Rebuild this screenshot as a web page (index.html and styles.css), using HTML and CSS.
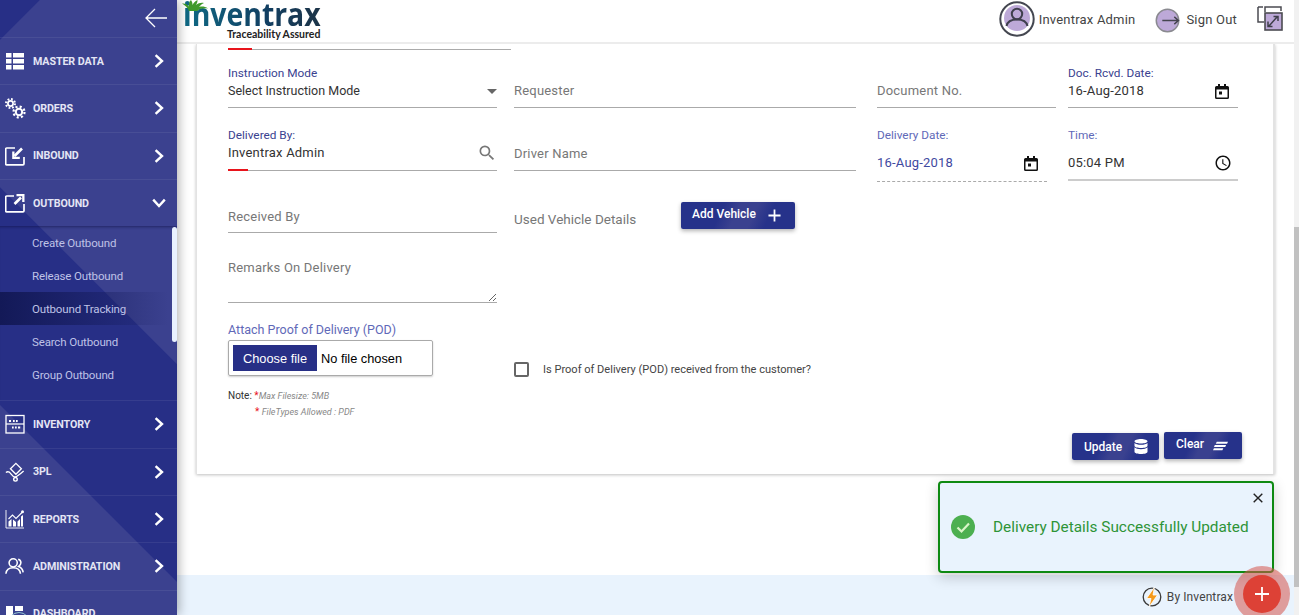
FILE: index.html
```html
<!DOCTYPE html>
<html lang="en">
<head>
<meta charset="utf-8">
<title>Inventrax - Outbound Tracking</title>
<link rel="stylesheet" href="styles.css">
</head>
<body>
<svg class="defs" aria-hidden="true">
  <symbol id="chev-r" viewBox="0 0 10 14"><path d="M1.6 1.2 8 7l-6.400 5.800" fill="none" stroke="currentColor" stroke-width="2.400"/></symbol>
  <symbol id="chev-d" viewBox="0 0 14 10"><path d="M1.200 1.600 7 8l5.800-6.400" fill="none" stroke="currentColor" stroke-width="2.400"/></symbol>
  <symbol id="cal" viewBox="0 0 14 15"><path d="M3 0h2v2h4V0h2v2h1.500A1.500 1.500 0 0 1 14 3.500v10a1.500 1.500 0 0 1-1.500 1.500h-11A1.500 1.500 0 0 1 0 13.500v-10A1.500 1.500 0 0 1 1.500 2H3zM1.500 5.500v8h11v-8z" fill="#111"/><rect x="4" y="7.500" width="3" height="3" fill="#111"/></symbol>
</svg>

<aside class="sidebar">
  <div class="side-top">
    <svg class="back" viewBox="0 0 23 20"><path d="M22.500 10H1.500M10.500 1 1.500 10l9 9" fill="none" stroke="#fff" stroke-width="1.300"/></svg>
  </div>
  <nav class="nav">
    <a class="nav-item"><svg class="ni" viewBox="0 0 20 20"><path d="M1 2h5.500v4.600H1zM8 2h11v4.600H8zM1 8h5.500v4.600H1zM8 8h11v4.600H8zM1 14h5.500v4.600H1zM8 14h11v4.600H8z" fill="#fff"/></svg><span class="nl">MASTER DATA</span><svg class="chev"><use href="#chev-r"/></svg></a>
    <a class="nav-item"><svg class="ni ni-gears" viewBox="0 0 22 22"><g fill="none" stroke="#fff"><circle cx="6.500" cy="6.500" r="2.600" stroke-width="1.700"/><circle cx="6.500" cy="6.500" r="4.500" stroke-width="2" stroke-dasharray="1.800 1.730"/><circle cx="15" cy="15" r="3.200" stroke-width="2"/><circle cx="15" cy="15" r="5.500" stroke-width="2.200" stroke-dasharray="2.100 2.220"/></g></svg><span class="nl">ORDERS</span><svg class="chev"><use href="#chev-r"/></svg></a>
    <a class="nav-item"><svg class="ni" viewBox="0 0 20 20"><path d="M10 2H1.700a1 1 0 0 0-1 1v14.800a1 1 0 0 0 1 1H18a1 1 0 0 0 1-1V11" fill="none" stroke="#fff" stroke-width="1.700"/><path d="M17 2.500 9.500 10" stroke="#fff" stroke-width="2.600"/><path d="M7.200 5.500v7.500h7.600v-2.300H9.500V5.500z" fill="#fff"/></svg><span class="nl">INBOUND</span><svg class="chev"><use href="#chev-r"/></svg></a>
    <a class="nav-item"><svg class="ni" viewBox="0 0 20 20"><path d="M9 3H1.700a1 1 0 0 0-1 1v13.800a1 1 0 0 0 1 1H18a1 1 0 0 0 1-1V11" fill="none" stroke="#fff" stroke-width="1.700"/><path d="M9.500 11 16 4.500" stroke="#fff" stroke-width="2.600"/><path d="M11.500 1h8v8h-2.300V3.300h-5.700z" fill="#fff"/></svg><span class="nl">OUTBOUND</span><svg class="chev chev-open"><use href="#chev-d"/></svg></a>
    <div class="sub">
      <a class="sub-item">Create Outbound</a>
      <a class="sub-item">Release Outbound</a>
      <a class="sub-item sub-item-active">Outbound Tracking</a>
      <a class="sub-item">Search Outbound</a>
      <a class="sub-item">Group Outbound</a>
    </div>
    <a class="nav-item"><svg class="ni" viewBox="0 0 20 20"><rect x="1" y="1.500" width="18" height="17.500" fill="none" stroke="#fff" stroke-width="1.300"/><path d="M1 10h18" stroke="#fff" stroke-width="1.200"/><path d="M4 6h2v2H4zM8 6h1.700v2H8zM11 6h1.700v2H11zM7 12.500h1.700v2H7zM10 12.500h1.700v2H10zM13 12.500h2.200v2H13z" fill="#fff"/></svg><span class="nl">INVENTORY</span><svg class="chev"><use href="#chev-r"/></svg></a>
    <a class="nav-item"><svg class="ni" viewBox="0 0 22 22"><path d="M12 1.500 18 7.500 12 13.500 6 7.500z" fill="none" stroke="#fff" stroke-width="1.500"/><path d="M1 11.500c2-1.500 4-.5 5.500 1.500s3 3.500 4.500 3.500 5-2.500 9.500-6.500" fill="none" stroke="#fff" stroke-width="1.500"/><circle cx="11.500" cy="19" r="2" fill="none" stroke="#fff" stroke-width="1.500"/></svg><span class="nl">3PL</span><svg class="chev"><use href="#chev-r"/></svg></a>
    <a class="nav-item"><svg class="ni" viewBox="0 0 20 20"><path d="M1 1v18h18" fill="none" stroke="#fff" stroke-width=".9"/><path d="M3.500 17.500v-5l3-2.500v7.500zM8 17.500v-7l3 2.500v4.500zM12.500 17.500v-5l2.500-2.500v7.500zM16 17.500V7.500l2-1.500v11.500z" fill="#fff"/><path d="M3.500 10 7.500 6l3.500 3.500L17.500 3" fill="none" stroke="#fff" stroke-width="1.100"/><circle cx="17.500" cy="2.800" r="1.500" fill="#fff"/></svg><span class="nl">REPORTS</span><svg class="chev"><use href="#chev-r"/></svg></a>
    <a class="nav-item"><svg class="ni" viewBox="0 0 22 20"><g fill="none" stroke="#fff" stroke-width="1.700"><circle cx="9" cy="6.500" r="4.500"/><path d="M1 18.500c.5-4.500 3-6.500 8-6.500s7.500 2 8 6.500"/><path d="M14.500 2.500c2 .5 3 2 3 4s-1 3-2.500 4c2.500 1 4.500 3 5 6.500"/></g></svg><span class="nl">ADMINISTRATION</span><svg class="chev"><use href="#chev-r"/></svg></a>
    <a class="nav-item"><svg class="ni" viewBox="0 0 20 20"><path d="M1 2h7v9H1zM10 2h8v5h-8zM1 13h7v5H1zM10 9h8v9h-8z" fill="#fff"/></svg><span class="nl">DASHBOARD</span></a>
  </nav>
  <span class="side-thumb"></span>
  <span class="side-badge"></span>
</aside>

<div class="main">
  <header class="topbar">
    <div class="logo">
      <span class="logo-name">inventrax</span>
      <span class="logo-tag">Traceability Assured</span>
      <svg class="leaf" viewBox="0 0 26 11"><path d="M7 11C6 8 3 5 0 3.500c2.500-.5 5 .5 7 3C6.500 4 7 1.500 9 0c1 1.500 1.500 3 1.500 5C11.500 3 13 1 15.500 0c0 2-.5 3.500-1.500 5 2.500-2 5-2.500 8-2-2 1-4 2.500-5 4 3-1 6-.5 9 1.500-4-.5-8 0-11 2.500H9z" fill="#3f9a2b"/></svg>
    </div>
    <svg class="avatar" viewBox="0 0 36 36"><circle cx="18" cy="18" r="16.700" fill="#fff" stroke="#444750" stroke-width="2"/><circle cx="18" cy="17" r="13" fill="#bda9d8"/><circle cx="18" cy="13" r="5.200" fill="#bda9d8" stroke="#3f3f4d" stroke-width="2"/><path d="M7.500 25c1-5 5-6.500 10.500-6.500S27.500 20 28.500 25" fill="none" stroke="#3f3f4d" stroke-width="2"/></svg>
    <span class="top-text top-user">Inventrax Admin</span>
    <svg class="signout" viewBox="0 0 24 24"><circle cx="12" cy="12" r="10.800" fill="#bda9d8" stroke="#8a8a90" stroke-width="1.400"/><path d="M7 12h15M18.500 8.500 22.500 12l-4 3.500" fill="none" stroke="#45454f" stroke-width="1.400"/></svg>
    <span class="top-text top-sign">Sign Out</span>
    <svg class="fullscreen" viewBox="0 0 26 26"><path d="M8 6V1h16v4M1 1h5M1 1v15h6" fill="none" stroke="#4b4b52" stroke-width="1.500"/><rect x="8" y="7" width="17" height="17" fill="#bda9d8" stroke="#4b4b52" stroke-width="1.600"/><path d="M12 20l8-9M16.500 10.500H21v4.500M11 15.500V20.500h4.500" fill="none" stroke="#3f3f4a" stroke-width="1.500"/></svg>
  </header>

  <main class="content">
    <section class="card">
      <div class="stub"><span class="accent accent-wide"></span></div>

      <div class="row row-1">
        <div class="field field-c1"><label class="lab lab-strong">Instruction Mode</label><div class="val val-select">Select Instruction Mode<span class="caret"></span></div></div>
        <div class="field field-c2 field-plain"><div class="val val-ph">Requester</div></div>
        <div class="field field-c3 field-plain"><div class="val val-ph">Document No.</div></div>
        <div class="field"><label class="lab lab-strong">Doc. Rcvd. Date:</label><div class="val val-icon">16-Aug-2018<svg class="ficon"><use href="#cal"/></svg></div></div>
      </div>

      <div class="row row-2">
        <div class="field field-c1 field-person"><label class="lab lab-strong">Delivered By:</label><div class="val val-icon">Inventrax Admin<svg class="ficon-search" viewBox="0 0 24 24"><path d="M15.500 14h-.79l-.28-.27A6.470 6.470 0 0 0 16 9.500 6.500 6.500 0 1 0 9.500 16c1.610 0 3.090-.59 4.230-1.570l.27.28v.79l5 4.990L20.490 19l-4.990-5zm-6 0C7.010 14 5 11.990 5 9.500S7.010 5 9.500 5 14 7.010 14 9.500 11.990 14 9.500 14z" fill="#777"/></svg></div><span class="accent"></span></div>
        <div class="field field-c2 field-plain field-driver"><div class="val val-ph">Driver Name</div></div>
        <div class="field field-c3b field-tall field-dash"><label class="lab lab-soft">Delivery Date:</label><div class="val val-icon val-blue">16-Aug-2018<svg class="ficon"><use href="#cal"/></svg></div></div>
        <div class="field field-tall field-thick"><label class="lab lab-soft">Time:</label><div class="val val-icon">05:04 PM<svg class="ficon-clock" viewBox="0 0 24 24"><path d="M11.990 2C6.470 2 2 6.480 2 12s4.470 10 9.990 10C17.520 22 22 17.520 22 12S17.520 2 11.990 2zM12 20c-4.420 0-8-3.580-8-8s3.580-8 8-8 8 3.580 8 8-3.580 8-8 8zm.5-13H11v6l5.250 3.150.75-1.230-4.500-2.670z" fill="#111"/></svg></div></div>
      </div>

      <div class="row row-3">
        <div class="field field-c1 field-received"><div class="val val-ph">Received By</div></div>
        <div class="vehicle">
          <span class="vehicle-label">Used Vehicle Details</span>
          <button class="btn btn-add" type="button">Add Vehicle<svg class="btn-plus" viewBox="0 0 14 14"><path d="M7 .5v13M.5 7h13" stroke="#fff" stroke-width="1.900"/></svg></button>
        </div>
      </div>

      <div class="remarks-row">
        <textarea class="remarks" placeholder="Remarks On Delivery"></textarea>
      </div>

      <div class="row row-5">
        <div class="pod">
          <span class="lab lab-soft lab-pod">Attach Proof of Delivery (POD)</span>
          <label class="file"><input class="file-input" type="file"><span class="file-btn">Choose file</span><span class="file-name">No file chosen</span></label>
          <p class="note">Note: <span class="star">*</span><em>Max Filesize: 5MB</em></p>
          <p class="note note-2"><span class="star">*</span> <em>FileTypes Allowed : PDF</em></p>
        </div>
        <label class="check"><input class="check-box" type="checkbox"><span>Is Proof of Delivery (POD) received from the customer?</span></label>
      </div>

      <div class="actions">
        <button class="btn btn-update" type="button">Update<svg class="btn-db" viewBox="0 0 14 15"><path d="M7 0c3.600 0 6.500 1 6.500 2.300S10.600 4.600 7 4.600.5 3.600.5 2.300 3.400 0 7 0zM.5 4c1 1.200 3.600 1.800 6.500 1.800S12.500 5.200 13.500 4v2.700C13.500 8 10.600 9 7 9S.5 8 .5 6.700zM.5 8.300C1.500 9.500 4.100 10.200 7 10.200s5.500-.7 6.500-1.900V12.700C13.500 14 10.600 15 7 15S.5 14 .5 12.700z" fill="#fff"/></svg></button>
        <button class="btn btn-clear" type="button">Clear<svg class="btn-lines" viewBox="0 0 16 10"><path d="M4 .5h12l-1 2H3zM2 4h12l-1 2H1zM1 7.500h10l-1 2H0z" fill="#fff"/></svg></button>
      </div>
    </section>
  </main>

  <footer class="footer">
    <svg class="bolt" viewBox="0 0 20 20"><circle cx="10" cy="10" r="8.800" fill="none" stroke="#3a3a3a" stroke-width="1.300"/><path d="M12.500 0 4.500 11.500h4.500L7 20l8.500-12H11z" fill="#f59a1b" stroke="#fff" stroke-width=".8"/></svg>
    <span class="by">By Inventrax</span>
  </footer>
</div>

<div class="scroll"><span class="scroll-thumb"></span></div>

<div class="toast">
  <svg class="toast-check" viewBox="0 0 24 24"><circle cx="12" cy="12" r="12" fill="#4caf50"/><path d="M6.500 12.500 10.500 16.500 18 8.500" fill="none" stroke="#d9f5c8" stroke-width="2.200"/></svg>
  <span class="toast-text">Delivery Details Successfully Updated</span>
  <svg class="toast-x" viewBox="0 0 10 10"><path d="M.7.7l8.600 8.600M9.300.7.700 9.300" stroke="#222" stroke-width="1.400"/></svg>
</div>

<button class="fab" type="button"><svg viewBox="0 0 14 14"><path d="M7 0v14M0 7h14" stroke="#fff" stroke-width="1.800"/></svg></button>
</body>
</html>
```
FILE: styles.css
```css
* { box-sizing: border-box; }
html, body { margin: 0; height: 615px; overflow: hidden; }
body { display: flex; width: 1299px; background: #fff; font-family: Roboto, "Liberation Sans", sans-serif; color: #333; }
.defs { width: 0; height: 0; position: absolute; }

/* sidebar */
.sidebar {
  position: relative; z-index: 3; flex: 0 0 177px; height: 615px; overflow: hidden;
  color: #fff; box-shadow: 2px 0 10px rgba(0,0,0,.3);
  background:
    linear-gradient(135deg, #272f86 28px, rgba(39,47,134,0) 28.500px),
    linear-gradient(45deg, #3b418f 148px, #272f86 149px, #272f86 302px, #3b418f 303px);
}
.side-top { height: 37px; display: flex; justify-content: flex-end; align-items: center; padding: 0 9px 2px 0; }
.back { width: 24px; height: 20px; }
.nav-item { height: 47.330px; display: flex; align-items: center; padding: 0 12px 0 5px; border-top: 1px solid rgba(255,255,255,.07); }
.ni { width: 20px; height: 20px; flex: none; margin-right: 8px; }
.ni-gears { width: 22px; height: 22px; margin: 0 7px 0 -1px; }
.nl { flex: 1; font-size: 10.700px; font-weight: 700; letter-spacing: -.1px; color: #e4e5f4; white-space: nowrap; }
.chev { width: 10px; height: 14px; flex: none; color: #fff; margin-right: 1px; }
.chev-open { width: 14px; height: 10px; margin-right: -1px; }
.sub { height: 174px; padding-bottom: 9px; box-shadow: inset 0 3px 3px -2px rgba(10,12,60,.5); }
.sub-item { display: flex; align-items: center; height: 33px; padding-left: 32px; font-size: 11.500px; letter-spacing: -.15px; color: #bfc2e6; }
.sub-item-active { background: linear-gradient(90deg, #131957, rgba(19,25,87,0) 95%); }
.side-thumb { position: absolute; left: 172px; top: 227px; width: 5px; height: 115px; border-radius: 3px; background: #e9f1ff; }
.side-badge { position: absolute; left: 8px; top: 612px; width: 22px; height: 22px; border-radius: 50%; background: #3b418f; border: 1px solid #8fc0d0; }

/* main */
.main { flex: 1; min-width: 0; height: 615px; display: flex; flex-direction: column; }
.topbar { flex: 0 0 44px; height: 44px; display: flex; align-items: flex-start; padding: 0 11px 0 0; border-bottom: 2px solid #ececec; background: #fff; }
.logo { display: flex; flex-direction: column; position: relative; width: 145px; height: 40px; margin: 0 auto 0 6px; }
.leaf { position: absolute; left: -1px; top: 0; width: 26px; height: 11px; }
.logo-name {
  display: block; width: 163px; height: 26px; transform: scaleX(.86); transform-origin: 0 0;
  font-family: "Open Sans", sans-serif; font-weight: 700; font-size: 33px; line-height: 26px;
  margin-top: 1px; background: linear-gradient(90deg, #0f6a85, #123f62 60%, #1d3346); -webkit-background-clip: text; background-clip: text; color: transparent;
}
.logo-tag { font-family: Lato, sans-serif; font-weight: 700; font-size: 10.500px; line-height: 10px; margin-left: 44px; margin-top: 2px; color: #222; white-space: nowrap; }
.avatar { width: 36px; height: 36px; margin: 1px 4px 0 0; }
.top-text { font-size: 13px; line-height: 18px; margin-top: 11px; letter-spacing: .2px; color: #444; }
.top-user { margin-right: 20px; }
.signout { width: 25px; height: 25px; margin: 8px 6px 0 0; }
.top-sign { margin-right: 20px; }
.fullscreen { width: 26px; height: 26px; margin-top: 6px; }

.content { flex: 1; min-height: 0; overflow: hidden; padding-left: 19px; background: #fff; }
.card { width: 1079px; height: 430px; padding: 5px 31px 0 31px; background: #fff; border-left: 1px solid #e3e3e3; border-right: 2px solid #e3e3e3; box-shadow: 0 1px 3px rgba(0,0,0,.25); }
.stub { position: relative; width: 283px; border-bottom: 1px solid #aaa; height: 1px; }
.accent { position: absolute; left: 0; bottom: -1px; width: 20px; height: 2px; background: #e8141c; }
.accent-wide { width: 24px; }

.row { display: grid; grid-template-columns: 286px 363px 191px 170px; align-items: start; }
.row-1 { padding-top: 15px; }
.row-2 { padding-top: 19px; }
.row-3 { height: 50px; margin-top: 1px; }
.field { position: relative; border-bottom: 1px solid #aaa; padding-bottom: 7px; }
.field-c1 { margin-right: 17px; }
.field-c2 { margin-right: 21px; }
.field-c3 { margin-right: 12px; }
.field-c3b { margin-right: 21px; }
.field-plain { padding-top: 16px; padding-bottom: 7px; }
.field-person { padding-bottom: 8px; }
.row .field .val { margin-top: 1px; }
.field-driver { padding-top: 17px; }
.row .field-tall .val { margin-top: 11px; }
.field-tall { padding-bottom: 9px; }
.field-dash { border-bottom: 1px dashed #aaa; }
.field-thick { border-bottom: 2px solid #ccc; padding-bottom: 7px; }
.field-received { margin-top: 25px; padding-bottom: 6px; }
.row .field-received .val { margin-top: 0; }
.lab { display: block; height: 16px; font-size: 11.800px; line-height: 16px; }
.lab-strong { color: #3a4290; }
.lab-soft { color: #5f69b8; }
.val { display: flex; align-items: center; justify-content: space-between; height: 18px; font-size: 13px; letter-spacing: .2px; line-height: 18px; color: #333; }
.val-ph { color: #777; }
.val-blue { color: #3f4a9f; }
.caret { width: 0; height: 0; border: 5px solid transparent; border-top: 5px solid #666; border-bottom: 0; }
.val-select { font-size: 12.500px; letter-spacing: 0; }
.ficon { width: 14px; height: 15px; margin-right: 9px; }
.ficon-search { width: 20px; height: 20px; }
.ficon-clock { width: 18px; height: 18px; margin-right: 6px; }

.vehicle { grid-column: 2 / 4; display: flex; align-items: flex-start; padding-top: 19px; }
.vehicle-label { width: 167px; margin-top: 8px; font-size: 13.500px; line-height: 18px; color: #777; }
.btn { display: flex; align-items: center; justify-content: space-between; height: 27px; padding: 0; border: 0; border-radius: 2px; color: #fff; font: 500 12px Roboto, sans-serif; box-shadow: 0 2px 4px rgba(0,0,0,.3); background: linear-gradient(115deg, #26328a 35%, #3a418f 48%, #3a418f 62%, #26328a 75%); }
.btn-add { width: 114px; padding: 0 14px 3px 11px; }
.btn-plus { width: 13px; height: 13px; margin-top: 3px; }

.remarks-row { padding-top: 26px; }
.remarks { display: block; width: 269px; height: 44px; padding: 0; border: 0; border-bottom: 1px solid #aaa; outline: 0; background: #fff; font: 13px/18px Roboto, sans-serif; letter-spacing: .2px; }
.remarks::placeholder { color: #777; opacity: 1; }

.row-5 { padding-top: 19px; height: 115px; }
.pod { grid-column: 1; }
.lab-pod { font-size: 12.500px; margin-bottom: 2px; }
.file { display: flex; align-items: center; width: 205px; height: 36px; padding: 4px; border: 1px solid #aaa; border-radius: 2px; box-shadow: 0 1px 2px rgba(0,0,0,.2); font: 12.800px "Liberation Sans", sans-serif; color: #000; }
.file-input { display: none; }
.file-btn { display: flex; align-items: center; justify-content: center; width: 84px; height: 26px; margin-right: 4px; background: #272f86; color: #fff; }
.note { margin: 14px 0 0; font-size: 10px; line-height: 12px; color: #333; }
.note em { font-size: 9px; color: #888; }
.note-2 { margin: 4px 0 0 27px; }
.star { color: #e8141c; }
.check { grid-column: 2 / 4; display: flex; align-items: center; margin-top: 40px; font-size: 11.050px; color: #444; }
.check-box { appearance: none; width: 15px; height: 15px; margin: 0 14px 0 0; border: 2px solid #666; border-radius: 2px; background: #fff; }

.actions { display: flex; justify-content: flex-end; align-items: flex-start; gap: 5px; margin-top: 14px; }
.btn-update { width: 87px; margin-top: 1px; padding: 0 11px 0 12px; }
.btn-db { width: 14px; height: 15px; }
.btn-clear { width: 78px; padding: 0 14px 4px 12px; }
.btn-lines { width: 15px; height: 10px; margin-top: 4px; }

.footer { flex: 0 0 40px; display: flex; align-items: center; justify-content: flex-end; padding: 4px 61px 0 0; background: #e9f3fd; }
.bolt { width: 20px; height: 20px; margin-right: 5px; }
.by { font-size: 12px; letter-spacing: .1px; color: #444; white-space: nowrap; }

.scroll { flex: 0 0 5px; height: 615px; padding-top: 227px; background: #f1f1f1; }
.scroll-thumb { display: block; height: 360px; background: #c1c1c1; }

.toast { position: absolute; left: 938px; top: 481px; width: 336px; height: 92px; display: flex; align-items: center; padding: 0 0 1px 11px; border: 2px solid #0e8a12; border-radius: 4px; background: #e9f3fd; box-shadow: 0 4px 14px rgba(0,0,0,.2); z-index: 4; }
.toast-check { width: 24px; height: 24px; margin-right: 18px; }
.toast-text { font-size: 15.350px; color: #2e9437; white-space: nowrap; }
.toast-x { position: absolute; right: 9px; top: 10px; width: 10px; height: 10px; }
.fab { position: absolute; left: 1243px; top: 575px; width: 38px; height: 38px; padding: 11px; border: 0; border-radius: 50%; background: #dd4136; box-shadow: 0 0 0 9px rgba(214,84,76,.55); z-index: 5; }
.fab svg { display: block; width: 14px; height: 14px; margin: 1px; }
```
